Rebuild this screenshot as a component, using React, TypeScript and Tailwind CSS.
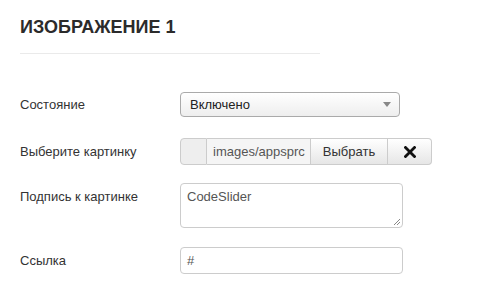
const Label = ({ children, top = false }: { children: React.ReactNode; top?: boolean }) => (
  <div className={`w-[160px] shrink-0 text-[13px] leading-[16px] ${top ? "pt-[6px] self-start" : ""}`}>
    {children}
  </div>
);

const App = () => {
  return (
    <div className="w-[481px] h-[292px] bg-white font-['Liberation_Sans',Arial,sans-serif] text-[#333] pl-5 pt-[17px] overflow-hidden">
      <h2 className="text-[18px] leading-[20px] font-bold text-[#2b2b2b]">ИЗОБРАЖЕНИЕ 1</h2>
      <div className="mt-4 w-[300px] h-px bg-[#eaeaea]" />

      {/* Состояние */}
      <div className="mt-[38px] flex items-center h-[25px]">
        <Label>Состояние</Label>
        <div className="w-[220px] h-[25px] rounded-[4px] border border-[#aaa] bg-gradient-to-b from-white to-[#eee] flex items-center justify-between pl-[9px] pr-[8px] text-[13px] text-[#222]">
          <span>Включено</span>
          <svg width="8" height="5" viewBox="0 0 8 5">
            <path d="M0 0h8L4 5z" fill="#888" />
          </svg>
        </div>
      </div>

      {/* Выберите картинку */}
      <div className="mt-[21px] flex items-center h-[27px]">
        <Label>Выберите картинку</Label>
        <div className="flex h-[27px] text-[13px]">
          <div className="w-[27px] h-full rounded-l-[4px] border border-[#ccc] bg-[#eee]" />
          <div className="w-[103px] h-full border-y border-[#ccc] bg-[#f5f5f5] flex items-center pl-[6px] text-[#555] overflow-hidden whitespace-nowrap">
            images/appsprc
          </div>
          <div className="w-[78px] h-full border border-[#ccc] bg-gradient-to-b from-white to-[#e6e6e6] flex items-center justify-center text-[#333]">
            Выбрать
          </div>
          <div className="w-[44px] h-full rounded-r-[4px] border-y border-r border-[#ccc] bg-gradient-to-b from-white to-[#e6e6e6] flex items-center justify-center">
            <svg width="12" height="12" viewBox="0 0 12 12">
              <path d="M1.5 1.5l9 9M10.5 1.5l-9 9" stroke="#111" strokeWidth="2.8" strokeLinecap="square" />
            </svg>
          </div>
        </div>
      </div>

      {/* Подпись к картинке */}
      <div className="mt-[18px] flex h-[45px]">
        <Label top>Подпись к картинке</Label>
        <div className="relative w-[223px] h-[45px] rounded-[4px] border border-[#ccc] bg-white pl-[6px] pt-[5px] text-[13px] leading-[16px] text-[#555]">
          CodeSlider
          <svg className="absolute right-[2px] bottom-[2px]" width="7" height="7" viewBox="0 0 7 7">
            <path d="M7 1L1 7M7 4L4 7" stroke="#888" strokeWidth="1" />
          </svg>
        </div>
      </div>

      {/* Ссылка */}
      <div className="mt-[19px] flex items-center h-[27px]">
        <Label>Ссылка</Label>
        <div className="w-[223px] h-[27px] rounded-[4px] border border-[#ccc] bg-white flex items-center pl-[6px] text-[13px] text-[#555]">
          #
        </div>
      </div>
    </div>
  );
};

export default App;
